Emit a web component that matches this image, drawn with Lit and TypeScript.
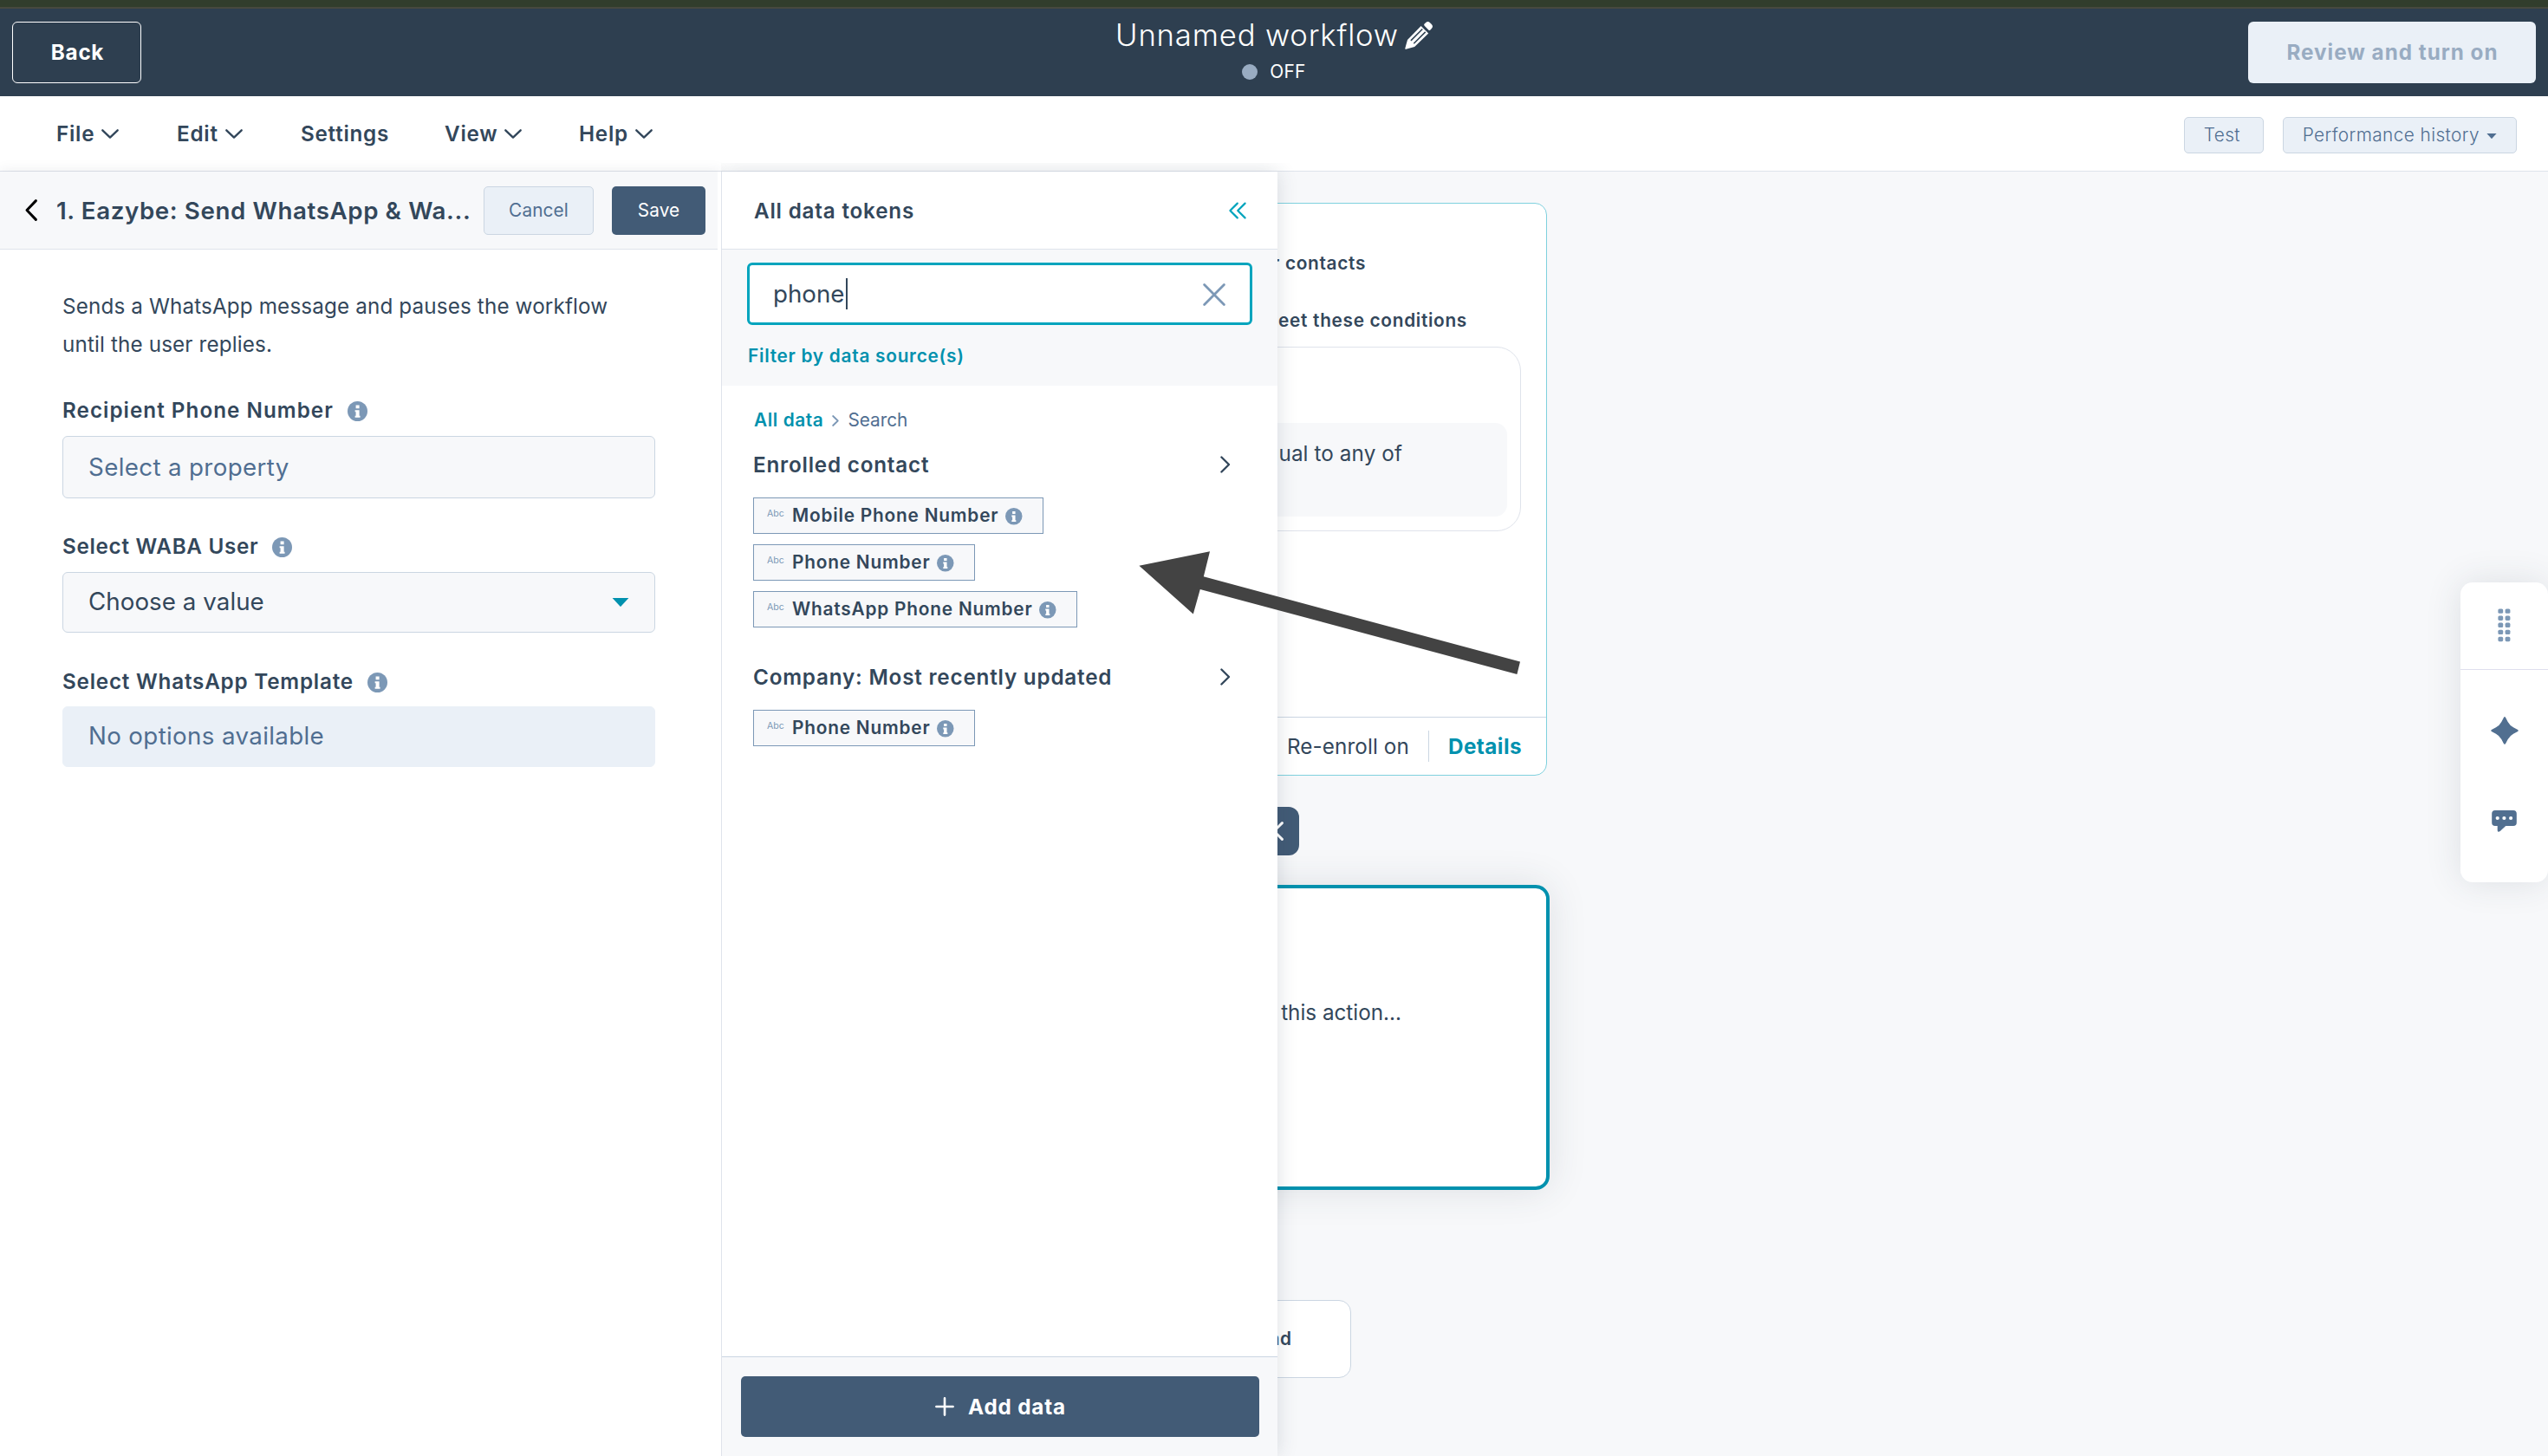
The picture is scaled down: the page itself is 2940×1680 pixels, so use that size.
import { LitElement, html, css, svg, nothing } from "lit";
import { customElement, property } from "lit/decorators.js";

type IconName =
  | "down" | "left" | "right" | "double-left" | "close" | "info" | "pencil"
  | "plus" | "caret" | "crumb" | "grip" | "sparkle" | "chat" | "cross";

const ICONS: Record<IconName, { w: number; h: number; body: unknown }> = {
  down: { w: 20, h: 11, body: svg`<path class="line" d="M1.3 1.3 10 9.6 18.7 1.3" stroke-width="2.4"/>` },
  left: { w: 14, h: 25, body: svg`<path class="line" d="M12.4 1.6 2 12.5 12.4 23.4" stroke-width="3"/>` },
  right: { w: 12, h: 20, body: svg`<path class="line" d="M1.4 1.5 10 10 1.4 18.5" stroke-width="2.4"/>` },
  "double-left": { w: 20, h: 20, body: svg`<path class="line" d="M9.8 1.6 1.4 10 9.8 18.4M18.6 1.6 10.2 10 18.6 18.4" stroke-width="2.2"/>` },
  close: { w: 26, h: 26, body: svg`<path class="line" d="M1.6 1.6 24.4 24.4M24.4 1.6 1.6 24.4" stroke-width="2.8"/>` },
  cross: { w: 22, h: 22, body: svg`<path class="line" d="M1.6 1.6 20.4 20.4M20.4 1.6 1.6 20.4" stroke-width="3"/>` },
  info: { w: 24, h: 24, body: svg`<circle cx="12" cy="12" r="12"/><path class="cut" d="M10 4.800h4.200v3.800H10zM9 10.600h5.200v6.800h1v2.200H9v-2.200h1v-4.600H9z"/>` },
  pencil: {
    w: 32, h: 32,
    body: svg`<path d="M22.6 2.6 24 1.2a3.6 3.6 0 0 1 5 0l1.8 1.8a3.6 3.6 0 0 1 0 5l-1.4 1.4a1.6 1.6 0 0 1-2.2 0l-4.600-4.600a1.6 1.6 0 0 1 0-2.200z"/><path d="M18.600 4.900 27.200 13.500 11.200 29 1.200 31.700a.8.8 0 0 1-.9-1L3 20.900z"/><path class="groove" d="M20.300 8.500 6.900 21.900M23.700 11.900 10.300 25.300"/><path class="gap" d="M19.800 3.700 28.400 12.300"/>`,
  },
  plus: { w: 22, h: 22, body: svg`<path class="line" d="M11 1.4v19.2M1.4 11h19.2" stroke-width="2.6"/>` },
  caret: { w: 20, h: 10, body: svg`<path d="M.6 0h18.8L10.6 9.6a.8.8 0 0 1-1.2 0z"/>` },
  crumb: { w: 8, h: 13, body: svg`<path class="line" d="M1.1 1 6.8 6.5 1.1 12" stroke-width="1.8"/>` },
  grip: {
    w: 15, h: 39,
    body: [0, 1, 2, 3, 4].map((r) => [0, 1].map((c) =>
      svg`<rect x=${c * 8.2 + 0.4} y=${r * 8.1 + 0.4} width="5.8" height="5.4" rx="1.6"/>`)),
  },
  sparkle: { w: 32, h: 32, body: svg`<path d="M14.9.9q1.1-1.6 2.2 0l2.600 5.100q2.400 4.200 6.300 6.300l5.100 2.600q1.600 1.100 0 2.200l-5.100 2.600q-3.900 2.100-6.300 6.300l-2.600 5.100q-1.100 1.600-2.200 0l-2.600-5.100q-2.400-4.200-6.300-6.300l-5.100-2.600q-1.600-1.100 0-2.200l5.100-2.600q3.900-2.100 6.300-6.300z"/>` },
  chat: {
    w: 29, h: 25,
    body: svg`<path d="M4 0h21a3.800 3.800 0 0 1 3.800 3.800v10.400a3.800 3.800 0 0 1-3.800 3.800h-8.800l-6.400 6.100q-2.800 1.700-3.100-.9V18H4A3.800 3.800 0 0 1 .200 14.200V3.800A3.800 3.800 0 0 1 4 0z"/><circle class="cut" cx="6.700" cy="9" r="2.100"/><circle class="cut" cx="14.400" cy="9" r="2.100"/><circle class="cut" cx="22.100" cy="9" r="2.100"/>`,
  },
};

@customElement("ui-icon")
class UiIcon extends LitElement {
  @property() name: IconName = "down";
  @property({ type: Number }) size = 0;

  static styles = css`
    :host { display: inline-flex; flex: none; }
    svg { display: block; fill: currentColor; overflow: visible; }
    .line { fill: none; stroke: currentColor; stroke-linecap: round; stroke-linejoin: round; }
    .cut { fill: #fff; }
    .groove { fill: none; stroke: #2e3f50; stroke-width: 1.5; }
    .gap { fill: none; stroke: #2e3f50; stroke-width: 1.6; }
  `;

  render() {
    const i = ICONS[this.name];
    const w = this.size || i.w;
    return html`<svg width=${w} height=${(w * i.h) / i.w} viewBox="0 0 ${i.w} ${i.h}">${i.body}</svg>`;
  }
}

const MENU = [
  { label: "File", menu: true },
  { label: "Edit", menu: true },
  { label: "Settings", menu: false },
  { label: "View", menu: true },
  { label: "Help", menu: true },
];

const GROUPS = [
  { title: "Enrolled contact", tokens: ["Mobile Phone Number", "Phone Number", "WhatsApp Phone Number"] },
  { title: "Company: Most recently updated", tokens: ["Phone Number"] },
];

@customElement("app-root")
class AppRoot extends LitElement {
  static styles = css`
    :host {
      display: flex;
      flex-direction: column;
      width: 2940px;
      height: 1680px;
      overflow: hidden;
      background: #fff;
      color: #33475b;
      font-family: Inter, "Liberation Sans", sans-serif;
      font-size: 24.26px;
      font-weight: 400;
      line-height: 1;
      letter-spacing: 0.1px;
      white-space: nowrap;
    }
    * { box-sizing: border-box; }

    .strip { height: 10px; flex: none; background: #313d2c; border-bottom: 2px solid #47493f; }
    .topbar {
      height: 101px; flex: none; background: #2e3f50; color: #fff;
      display: grid; grid-template-columns: 1fr auto 1fr; align-items: start;
      padding: 0 14px;
    }
    .back {
      justify-self: start; margin-top: 15px; width: 149px; height: 71px;
      border: 1.5px solid #fff; border-radius: 6px;
      display: flex; align-items: center; justify-content: center;
      font-weight: 700; letter-spacing: 0.7px; padding: 0 0 1px 2px;
    }
    .heading { display: flex; flex-direction: column; align-items: center; }
    .name { display: flex; align-items: center; gap: 7px; height: 62px; font-size: 34.66px; font-weight: 300; letter-spacing: 0.82px; }
    .name span { height: 62px; line-height: 60px; }
    .status { display: flex; align-items: center; gap: 14px; font-size: 20.8px; letter-spacing: 0.3px; margin-top: 1px; }
    .dot { width: 18px; height: 18px; border-radius: 50%; background: #99acc2; margin-top: -1px; }
    .review {
      justify-self: end; margin-top: 15px; width: 332px; height: 71px; border-radius: 6px;
      background: #eaf0f7; color: #99acc2; font-weight: 700; letter-spacing: 0.99px;
      display: flex; align-items: center; justify-content: center; padding: 0 0 1px 1px;
    }

    .nav {
      height: 87px; flex: none; border-bottom: 1px solid #dfe3eb;
      display: flex; justify-content: space-between; padding: 0 36px 0 65px;
    }
    .menu { display: grid; grid-template-columns: 139px 143px 166px 155px 120px; font-weight: 600; letter-spacing: 0.74px; }
    .menu div { display: flex; align-items: center; gap: 8px; height: 86px; }
    .tools { display: flex; gap: 22px; margin-top: 24px; color: #506e91; font-size: 20.8px; font-weight: 300; letter-spacing: 0.42px; }
    .pill {
      height: 42px; border: 1px solid #cbd6e2; border-radius: 5px; background: #eaf0f7;
      display: flex; align-items: center; gap: 8px; padding: 1px 22px 0;
    }
    .pill.test { width: 92px; }

    .main { flex: 1; display: grid; grid-template-columns: 832px 642px 1fr; min-height: 0; }

    .editor { position: relative; z-index: 2; background: #fff; box-shadow: 0 0 14px rgba(45, 62, 80, 0.1); }
    .editor-head {
      width: 828px; height: 90px; background: #f7f8fa; border-bottom: 1px solid #dfe3eb;
      display: flex; align-items: center; padding: 0 14px 0 29px;
    }
    .editor-head .prev { color: #000; margin-bottom: 1px; }
    .editor-head .title { width: 493px; margin-left: 22px; padding-top: 2px; font-size: 27.73px; font-weight: 600; letter-spacing: 0.6px; }
    .btn {
      height: 56px; border-radius: 5px; display: flex; align-items: center; justify-content: center;
      font-size: 20.8px; letter-spacing: 0.1px; padding-top: 1px;
    }
    .btn.cancel { width: 127px; background: #eaf0f7; border: 1px solid #cbd6e2; color: #506e91; }
    .btn.save { width: 108px; margin-left: auto; background: #425b76; color: #fff; }
    .form { padding: 43px 76px 0 72px; }
    .desc { line-height: 44px; white-space: normal; width: 660px; letter-spacing: 0.13px; }
    .field-label { display: flex; align-items: center; gap: 16px; font-weight: 600; letter-spacing: 1.02px; height: 26px; }
    .field-label ui-icon { color: #7c98b6; margin-top: 2px; }
    .l1 { margin-top: 41px; } .l2 { margin-top: 42px; letter-spacing: 0.7px; } .l3 { margin-top: 43px; letter-spacing: 0.78px; }
    .field {
      display: flex; align-items: center; justify-content: space-between; width: 684px;
      padding: 0 29px 0 29px; border: 1.5px solid #cbd6e2; border-radius: 6px; background: #f7f8fa;
      font-size: 27.73px; letter-spacing: 0.35px;
    }
    .field.property { height: 72px; margin-top: 17px; padding-top: 1px; color: #506e91; }
    .field.user { height: 70px; margin-top: 17px; letter-spacing: 0.05px; }
    .field.user ui-icon { color: #0091ae; }
    .field.empty { height: 70px; margin-top: 16px; background: #eaf0f7; border-color: #eaf0f7; color: #506e91; }

    .tokens {
      position: relative; z-index: 3; background: #fff; border-left: 1px solid #dfe3eb;
      box-shadow: 0 0 22px rgba(45, 62, 80, 0.16); clip-path: inset(-10px -40px 0 0);
      display: flex; flex-direction: column;
    }
    .tokens-head {
      height: 90px; flex: none; border-bottom: 1px solid #dfe3eb; padding: 1px 36px 0 37px;
      display: flex; align-items: center; justify-content: space-between;
      font-weight: 600; letter-spacing: 0.8px;
    }
    .tokens-head ui-icon { color: #00a4bd; }
    .search { height: 157px; flex: none; background: #f7f8fa; padding: 15px 29px 0 29px; }
    .input {
      height: 72px; border: 3px solid #00a4bd; border-radius: 6px; background: #fff;
      display: flex; align-items: center; padding: 2px 28px 0 27px; font-size: 27.73px; letter-spacing: 0;
    }
    .cursor { width: 2px; height: 36px; background: #33475b; margin: -2px 0 0 1px; }
    .input ui-icon { margin: -1px 0 0 auto; color: #7c98b6; }
    .filter { margin: 24px 0 0 1px; height: 24px; line-height: 24px; font-size: 20.8px; font-weight: 600; letter-spacing: 0.74px; color: #0091ae; }
    .list { flex: 1; padding: 28px 54px 0 36px; }
    .crumbs { display: flex; align-items: center; gap: 10px; height: 24px; font-size: 20.8px; letter-spacing: 0; color: #506e91; }
    .crumbs b { font-weight: 600; color: #0091ae; letter-spacing: 0.6px; margin-left: 1px; }
    .crumbs ui-icon { color: #7c98b6; }
    .group-head { display: flex; align-items: center; justify-content: space-between; height: 26px; font-weight: 600; letter-spacing: 0.79px; }
    .group { margin-top: 44px; }
    .group:first-of-type { margin-top: 26px; }
    .chips { display: flex; flex-direction: column; align-items: flex-start; gap: 12px; margin-top: 25px; }
    .chip {
      height: 42px; display: flex; align-items: center; padding: 1px 23px 0 15px;
      border: 1.5px solid #7c98b6; background: #f7f8fa;
      font-size: 20.8px; font-weight: 600; letter-spacing: 0.8px;
    }
    .chip i { font-style: normal; font-size: 10.6px; font-weight: 400; letter-spacing: 0; color: #7c98b6; width: 29px; margin-top: -5px; }
    .chip ui-icon { color: #7c98b6; margin: 0 0 0 8px; }
    .footer { height: 115px; flex: none; border-top: 1px solid #cbd6e2; background: #f7f8fa; padding: 22px 21px 0 22px; }
    .add {
      height: 70px; border-radius: 5px; background: #425b76; color: #fff;
      display: flex; align-items: center; justify-content: center; gap: 16px; padding-left: 1px;
      font-weight: 700; letter-spacing: 0.82px;
    }

    /* Workflow canvas: nodes are placed freely around the centre line at x = -4px. */
    .canvas { position: relative; overflow: hidden; background: #f7f8fa; }
    .node { position: absolute; background: #fff; }
    .trigger {
      left: -319px; top: 36px; width: 630px; height: 661px; border: 1px solid #7fd1de; border-radius: 14px;
      display: flex; flex-direction: column;
    }
    .trigger-body { flex: 1; padding: 57px 29px 0 29px; font-size: 20.8px; font-weight: 600; letter-spacing: 0.69px; }
    .line1 { height: 24px; line-height: 24px; text-align: right; padding-right: 179px; }
    .line2 { height: 24px; line-height: 24px; text-align: right; padding-right: 62px; margin-top: 42px; }
    .criteria { margin-top: 18px; height: 213px; border: 1px solid #dfe3eb; border-radius: 28px; padding: 87px 15px 0; }
    .rule {
      height: 108px; border-radius: 14px; background: #f7f8fa; padding: 22px 121px 0 0; text-align: right;
      font-size: 24.26px; line-height: 26px; font-weight: 400; letter-spacing: 0.1px;
    }
    .trigger-foot {
      height: 67px; border-top: 1px solid #cbd6e2; display: flex; align-items: center; justify-content: flex-end;
      padding-right: 28px; letter-spacing: 0.1px;
    }
    .trigger-foot b { font-weight: 700; color: #0091ae; letter-spacing: 0.47px; border-left: 1px solid #cbd6e2; height: 36px; line-height: 36px; padding-left: 22px; margin-left: 22px; }
    .detach {
      left: -33px; top: 733px; width: 58px; height: 56px; border-radius: 12px; background: #425b76; color: #fff;
      display: flex; align-items: center; justify-content: center;
    }
    .action {
      left: -323px; top: 823px; width: 637px; height: 352px; border: 4px solid #0091ae; border-radius: 16px;
      box-shadow: 0 0 44px rgba(45, 62, 80, 0.13); padding: 130px 167px 0 0; text-align: right;
      letter-spacing: 0; line-height: 26px;
    }
    .end {
      left: -93px; top: 1302px; width: 178px; height: 90px; border: 1px solid #cbd6e2; border-radius: 14px;
      display: flex; align-items: center; justify-content: center; padding-left: 1px;
      font-size: 20.8px; font-weight: 600; letter-spacing: 0.6px;
    }
    .dock {
      position: absolute; right: 0; top: 474px; width: 101px; height: 346px; border-radius: 14px; background: #fff;
      box-shadow: 0 0 40px rgba(45, 62, 80, 0.13); color: #516f90;
      display: flex; flex-direction: column; align-items: center;
    }
    .dock .grip { width: 100%; height: 101px; border-bottom: 1px solid #dfdfee; color: #7c98b6; display: flex; justify-content: center; padding-top: 30px; }
    .dock .spark { margin-top: 54px; }
    .dock .talk { margin-top: 76px; margin-right: 1px; }

    .pointer { position: absolute; z-index: 5; left: 1314px; top: 636px; }
  `;

  private field(label: string, cls: string) {
    return html`<div class="field-label ${cls}"><span>${label}</span><ui-icon name="info" size="23"></ui-icon></div>`;
  }

  render() {
    return html`
      <div class="strip"></div>
      <header class="topbar">
        <div class="back">Back</div>
        <div class="heading">
          <div class="name"><span>Unnamed workflow</span><ui-icon name="pencil"></ui-icon></div>
          <div class="status"><div class="dot"></div>OFF</div>
        </div>
        <div class="review">Review and turn on</div>
      </header>
      <nav class="nav">
        <div class="menu">
          ${MENU.map((m) => html`<div>${m.label}${m.menu ? html`<ui-icon name="down"></ui-icon>` : nothing}</div>`)}
        </div>
        <div class="tools">
          <div class="pill test">Test</div>
          <div class="pill">Performance history<ui-icon name="caret" size="12"></ui-icon></div>
        </div>
      </nav>
      <div class="main">
        <section class="editor">
          <div class="editor-head">
            <ui-icon class="prev" name="left"></ui-icon>
            <div class="title">1. Eazybe: Send WhatsApp &amp; Wa...</div>
            <div class="btn cancel">Cancel</div>
            <div class="btn save">Save</div>
          </div>
          <div class="form">
            <div class="desc">Sends a WhatsApp message and pauses the workflow until the user replies.</div>
            ${this.field("Recipient Phone Number", "l1")}
            <div class="field property">Select a property</div>
            ${this.field("Select WABA User", "l2")}
            <div class="field user">Choose a value<ui-icon name="caret"></ui-icon></div>
            ${this.field("Select WhatsApp Template", "l3")}
            <div class="field empty">No options available</div>
          </div>
        </section>
        <section class="tokens">
          <div class="tokens-head">All data tokens<ui-icon name="double-left"></ui-icon></div>
          <div class="search">
            <div class="input">phone<div class="cursor"></div><ui-icon name="close"></ui-icon></div>
            <div class="filter">Filter by data source(s)</div>
          </div>
          <div class="list">
            <nav class="crumbs"><b>All data</b><ui-icon name="crumb"></ui-icon>Search</nav>
            ${GROUPS.map((g) => html`
              <div class="group">
                <div class="group-head">${g.title}<ui-icon name="right"></ui-icon></div>
                <div class="chips">
                  ${g.tokens.map((t) => html`<div class="chip"><i>Abc</i>${t}<ui-icon name="info" size="19.5"></ui-icon></div>`)}
                </div>
              </div>`)}
          </div>
          <div class="footer"><div class="add"><ui-icon name="plus"></ui-icon>Add data</div></div>
        </section>
        <section class="canvas">
          <div class="node trigger">
            <div class="trigger-body">
              <div class="line1">for contacts</div>
              <div class="line2">meet these conditions</div>
              <div class="criteria"><div class="rule">equal to any of</div></div>
            </div>
            <div class="trigger-foot">Re-enroll on<b>Details</b></div>
          </div>
          <div class="node detach"><ui-icon name="cross"></ui-icon></div>
          <div class="node action">this action...</div>
          <div class="node end">End</div>
          <aside class="dock">
            <div class="grip"><ui-icon name="grip"></ui-icon></div>
            <ui-icon class="spark" name="sparkle"></ui-icon>
            <ui-icon class="talk" name="chat"></ui-icon>
          </aside>
        </section>
      </div>
      <svg class="pointer" width="441" height="143" viewBox="1314 636 441 143">
        <path fill="#434343" d="M1314.400 652.800 1396 636.300 1388.800 665.300 1754 763.600 1750.400 778 1384.800 680 1376.800 708.400z"/>
      </svg>
    `;
  }
}
